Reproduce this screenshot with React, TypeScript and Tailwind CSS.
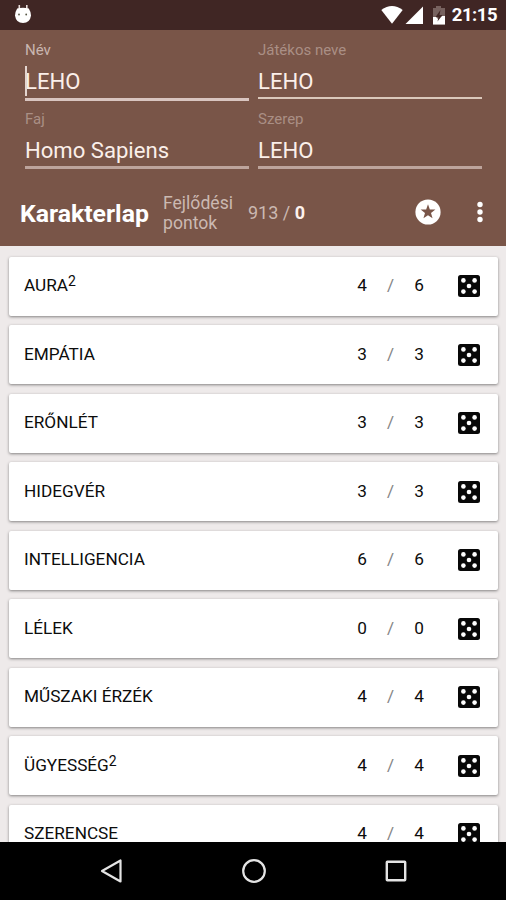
import React from "react";

type Stat = { name: string; sup?: string; current: number; max: number };

const stats: Stat[] = [
  { name: "AURA", sup: "2", current: 4, max: 6 },
  { name: "EMPÁTIA", current: 3, max: 3 },
  { name: "ERŐNLÉT", current: 3, max: 3 },
  { name: "HIDEGVÉR", current: 3, max: 3 },
  { name: "INTELLIGENCIA", current: 6, max: 6 },
  { name: "LÉLEK", current: 0, max: 0 },
  { name: "MŰSZAKI ÉRZÉK", current: 4, max: 4 },
  { name: "ÜGYESSÉG", sup: "2", current: 4, max: 4 },
  { name: "SZERENCSE", current: 4, max: 4 },
];

function StatusBar() {
  return (
    <div className="flex h-[30px] shrink-0 items-center bg-[#402624] pr-[9px] pl-[14px]">
      <svg width="18" height="20" viewBox="0 0 18 20" className="-mt-0.5">
        <path d="M5.3 1v5M12.800 1v5" stroke="#e8dcda" strokeWidth="1.6" />
        <path d="M3.2 4.500Q9 3 14.800 4.500Q17 8 17 11.500Q16 19 9 19Q2 19 1 11.500Q1 8 3.200 4.500Z" fill="#fff" />
        <circle cx="5" cy="10.500" r="0.9" fill="#554" />
        <circle cx="12.200" cy="10.500" r="0.9" fill="#554" />
      </svg>
      <svg width="67" height="20" viewBox="0 0 67 20" className="ml-auto">
        <path d="M0.3 5Q11 -2.8 21.7 5L11 18.8Z" fill="#fff" />
        <path d="M24.5 19L42 1.5V19Z" fill="#fff" />
        <path d="M55 1h5v2h4v16.500H52V3h3Z" fill="#77625f" />
        <path d="M52 12h3l2 2 4-3h3v8.500H52Z" fill="#fff" />
        <path d="M59.500 5L54.500 12H57.500L56.500 16.500L61.500 10H58.500Z" fill="#402624" />
      </svg>
      <span className="ml-[4px] text-[18.500px] leading-[30px] font-bold tracking-[-0.5px] text-white">21:15</span>
    </div>
  );
}

type FieldProps = { label: string; value: string; focused?: boolean; line: string; bright?: boolean };

function Field({ label, value, focused, line, bright }: FieldProps) {
  return (
    <div className="flex h-[69px] flex-col">
      <div className={`pt-px text-[15px] leading-5 ${bright ? "text-[#c9b6b0]" : "text-[#aa8f85]"}`}>{label}</div>
      <div className="relative flex h-[38px] items-center text-[22.100px] leading-[26px] text-[#fbefea]">
        {focused && <span className="absolute top-[6px] left-0 h-[30px] w-[1.500px] bg-[#e4d5cf]" />}
        <span className="pt-[4px]">{value}</span>
      </div>
      <div className={line} />
    </div>
  );
}

function Die() {
  return (
    <svg width="24" height="24" viewBox="0 0 24 24">
      <rect x="1" y="1" width="22" height="22" rx="2.500" fill="#080808" />
      <g fill="#fff">
        <circle cx="6.400" cy="6.400" r="2.300" />
        <circle cx="17.600" cy="6.400" r="2.300" />
        <circle cx="12" cy="12" r="2.300" />
        <circle cx="6.400" cy="17.600" r="2.300" />
        <circle cx="17.600" cy="17.600" r="2.300" />
      </g>
    </svg>
  );
}

function StatCard({ name, sup, current, max }: Stat) {
  return (
    <div className="flex h-[59px] shrink-0 items-center rounded-[2px] bg-white pr-[17px] pl-[15px] text-[17.200px] text-[#0c0c0c] shadow-[0_1px_3px_rgba(0,0,0,0.45)]">
      <span className="grow">
        {name}
        {sup && <sup className="top-[-5px] text-[14px] leading-none">{sup}</sup>}
      </span>
      <span className="w-[20px] text-center">{current}</span>
      <span className="w-[37px] text-center text-[#858585]">/</span>
      <span className="w-[20px] text-center">{max}</span>
      <span className="ml-[28px]">
        <Die />
      </span>
    </div>
  );
}

function NavBar() {
  return (
    <div className="flex h-[58px] shrink-0 items-center justify-center gap-[116.500px] bg-black pl-px">
      <svg width="26" height="26" viewBox="0 0 26 26" fill="none" stroke="#e4e4e4" strokeWidth="2.200">
        <path d="M22.500 2.500V23.500L4 13Z" strokeLinejoin="round" />
      </svg>
      <svg width="26" height="26" viewBox="0 0 26 26" fill="none" stroke="#e4e4e4" strokeWidth="2.200">
        <circle cx="13" cy="13" r="10.800" />
      </svg>
      <svg width="26" height="26" viewBox="0 0 26 26" fill="none" stroke="#e4e4e4" strokeWidth="2.400">
        <rect x="3.800" y="3.800" width="18.400" height="18.400" rx="0.500" />
      </svg>
    </div>
  );
}

export default function App() {
  return (
    <div className="flex h-[900px] w-[506px] flex-col overflow-hidden bg-[#eeeaea] font-[Roboto,sans-serif]">
      <StatusBar />
      <header className="h-[216px] shrink-0 bg-[#795548] pt-[9px]">
        <div className="grid grid-cols-[224px_224px] gap-x-[9px] pl-[25px]">
          <Field label="Név" value="LEHO" focused bright line="h-[3px] bg-[#d9c5c0]" />
          <Field label="Játékos neve" value="LEHO" line="-mt-px h-[2px] bg-[#dac8bb]" />
          <Field label="Faj" value="Homo Sapiens" line="-mt-[1px] h-[3px] bg-[#bda49c]" />
          <Field label="Szerep" value="LEHO" line="-mt-[1px] h-[3px] bg-[#bda49c]" />
        </div>
        <div className="flex h-[69px] items-center pr-[23px] pl-[20px] text-[#cbb9b2]">
          <h1 className="w-[143px] pt-[4px] text-[24.800px] leading-8 font-bold text-white">Karakterlap</h1>
          <p className="w-[85px] pt-[3px] text-[17.600px] leading-5">
            Fejlődési
            <br />
            pontok
          </p>
          <p className="pt-[3px] text-[18px] leading-6">
            913 / <b className="text-[#fdf1ec]">0</b>
          </p>
          <svg width="26" height="26" viewBox="0 0 26 26" className="ml-auto">
            <circle cx="13" cy="13" r="12.600" fill="#fff" />
            <path d="M13 5.200l1.850 5.250 5.550.15-4.400 3.400 1.550 5.350L13 16.200l-4.550 3.150L10 14l-4.400-3.400 5.550-.15Z" fill="#795548" />
          </svg>
          <svg width="6" height="22" viewBox="0 0 6 22" fill="#fff" className="ml-[36px]">
            <circle cx="3" cy="3.500" r="2.700" />
            <circle cx="3" cy="11" r="2.700" />
            <circle cx="3" cy="18.500" r="2.700" />
          </svg>
        </div>
      </header>
      <main className="flex h-[596px] shrink-0 flex-col gap-[9.500px] overflow-hidden pt-[10.500px] pr-[8px] pl-[9px]">
        {stats.map((stat) => (
          <StatCard key={stat.name} {...stat} />
        ))}
      </main>
      <NavBar />
    </div>
  );
}
